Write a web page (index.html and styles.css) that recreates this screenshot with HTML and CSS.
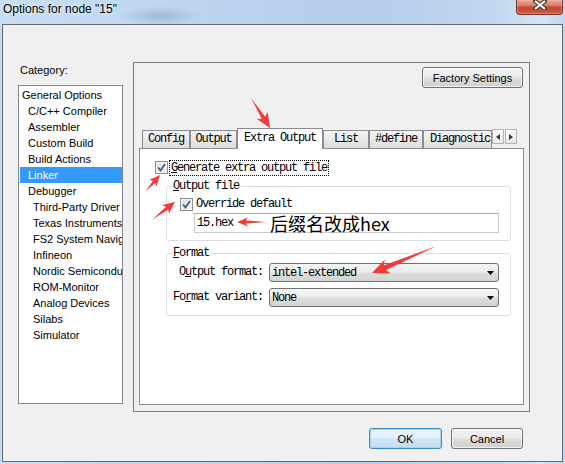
FILE: index.html
```html
<!DOCTYPE html>
<html>
<head>
<meta charset="utf-8">
<title>Options for node "15"</title>
<link rel="stylesheet" href="styles.css">
</head>
<body>
<div class="window">
  <div class="titlebar">
    <span class="title">Options for node "15"</span>
    <div class="close">
      <svg width="14" height="10" viewBox="0 0 14 10"><path d="M2 1 L12 9 M12 1 L2 9" stroke="#4a3a3a" stroke-width="4.2" stroke-linecap="square"/><path d="M2 1 L12 9 M12 1 L2 9" stroke="#fff" stroke-width="2.2"/></svg>
    </div>
  </div>
  <div class="client">
    <div class="main">
      <div class="category">
        <div class="cat-label">Category:</div>
        <ul class="cat-list">
          <li class="l0">General Options</li>
          <li class="l1">C/C++ Compiler</li>
          <li class="l1">Assembler</li>
          <li class="l1">Custom Build</li>
          <li class="l1">Build Actions</li>
          <li class="l1 sel">Linker</li>
          <li class="l1">Debugger</li>
          <li class="l2">Third-Party Driver</li>
          <li class="l2">Texas Instruments</li>
          <li class="l2">FS2 System Navigator</li>
          <li class="l2">Infineon</li>
          <li class="l2">Nordic Semiconductor</li>
          <li class="l2">ROM-Monitor</li>
          <li class="l2">Analog Devices</li>
          <li class="l2">Silabs</li>
          <li class="l2">Simulator</li>
        </ul>
      </div>
      <div class="panel">
        <div class="panel-top"><div class="btn factory">Factory Settings</div></div>
        <div class="tabbar">
          <div class="tabs">
            <div class="tab t-config">Config</div>
            <div class="tab t-output">Output</div>
            <div class="tab active t-extra">Extra Output</div>
            <div class="tab t-list">List</div>
            <div class="tab t-define">#define</div>
            <div class="tab t-diag">Diagnostic</div>
          </div>
          <div class="tab-arrows">
            <span class="tarrow"><svg width="4" height="6" viewBox="0 0 4 6"><path d="M4 0 L0 3 L4 6 Z" fill="#2b3a55"/></svg></span>
            <span class="tarrow"><svg width="4" height="6" viewBox="0 0 4 6"><path d="M0 0 L4 3 L0 6 Z" fill="#2b3a55"/></svg></span>
          </div>
        </div>
        <div class="tabpage">
          <div class="chk-row gen">
            <span class="chk"><svg width="9" height="9" viewBox="0 0 9 9"><path d="M1 4.5 L3.5 7.5 L8 1" stroke="#3c5a9a" stroke-width="1.8" fill="none"/></svg></span>
            <span class="chk-text focus"><u>G</u>enerate extra output file</span>
          </div>
          <fieldset class="group out-group">
            <legend><u>O</u>utput file</legend>
            <div class="chk-row ovr">
              <span class="chk"><svg width="9" height="9" viewBox="0 0 9 9"><path d="M1 4.5 L3.5 7.5 L8 1" stroke="#3c5a9a" stroke-width="1.8" fill="none"/></svg></span>
              <span class="chk-text">Override default</span>
            </div>
            <div class="textfield"><span class="mono">15.hex</span><span class="note">后缀名改成hex</span></div>
          </fieldset>
          <fieldset class="group fmt-group">
            <legend><u>F</u>ormat</legend>
            <div class="form-grid">
              <label class="flabel">O<u>u</u>tput format:</label>
              <div class="combo"><span class="mono">intel-extended</span><svg class="caret" width="7" height="4" viewBox="0 0 7 4"><path d="M0 0 L7 0 L3.5 4 Z" fill="#000"/></svg></div>
              <label class="flabel">Fo<u>r</u>mat variant:</label>
              <div class="combo"><span class="mono">None</span><svg class="caret" width="7" height="4" viewBox="0 0 7 4"><path d="M0 0 L7 0 L3.5 4 Z" fill="#000"/></svg></div>
            </div>
          </fieldset>
        </div>
      </div>
    </div>
    <div class="buttons">
      <div class="btn ok">OK</div>
      <div class="btn cancel">Cancel</div>
    </div>
  </div>
  <svg class="annot" width="565" height="464" viewBox="0 0 565 464">
    <g fill="#f23c3a">
      <g transform="translate(270,128) rotate(57.7)"><polygon points="-35.5,0 -12,-2 -15,-6.5 0,0 -15,6.5 -12,2"/></g>
      <g transform="translate(160,175) rotate(-48.8)"><polygon points="-22,0 -9,-1.6 -11,-5 0,0 -11,5 -9,1.6"/></g>
      <g transform="translate(175,202) rotate(-38)"><polygon points="-29,0 -10,-1.8 -12,-5.5 0,0 -12,5.5 -10,1.8"/></g>
      <g transform="translate(237,222) rotate(180)"><polygon points="-29,0 -9,-1.6 -11,-4.5 0,0 -11,4.5 -9,1.6"/></g>
      <g transform="translate(372,273) rotate(157.4)"><polygon points="-70,0 -14,-2.6 -17,-7.5 0,0 -17,7.5 -14,2.6"/></g>
    </g>
  </svg>
</div>
</body>
</html>
```

FILE: styles.css
```css
* { box-sizing: border-box; }
html, body { margin: 0; padding: 0; }
body {
  width: 565px;
  height: 464px;
  overflow: hidden;
  font-family: "Liberation Sans", Arial, sans-serif;
  font-size: 11px;
  color: #000;
}
.window {
  position: relative;
  width: 565px;
  height: 464px;
  display: flex;
  flex-direction: column;
  background:
    radial-gradient(ellipse 40px 10px at 160px 16px, rgba(120,150,190,0.45), rgba(120,150,190,0) 100%),
    linear-gradient(to right, #c8ddf3 0%, #bcd5ef 35%, #b3cdea 65%, #c2d8f0 88%, #d3e5f7 96%, #bfd6ef 100%);
}
.titlebar {
  height: 24px;
  display: flex;
  align-items: flex-start;
  flex-shrink: 0;
}
.title {
  margin: 2px 0 0 3px;
  font-size: 12px;
  line-height: 14px;
  text-shadow: 0 0 6px #e8f2fc, 0 0 3px #e8f2fc;
}
.close {
  margin-left: auto;
  margin-right: 2px;
  width: 47px;
  height: 15px;
  border: 1px solid #7a3328;
  border-top: none;
  border-radius: 0 0 4px 4px;
  background: linear-gradient(#e3a797 0%, #d88771 35%, #c5462f 55%, #cf5d45 100%);
  box-shadow: inset 0 0 0 1px rgba(255,200,190,0.35);
  display: flex;
  align-items: flex-start;
  justify-content: center;
}
.client {
  margin: 0 2px 2px 2px;
  height: 438px;
  border: 1px solid #636a73;
  background: #f0f0f0;
  display: flex;
  flex-direction: column;
}
.main {
  display: flex;
  margin-top: 37px;
  padding-left: 15px;
  gap: 10px;
}
.category {
  width: 105px;
  display: flex;
  flex-direction: column;
}
.cat-label {
  margin: 2px 0 0 2px;
  line-height: 13px;
  height: 13px;
}
.cat-list {
  list-style: none;
  margin: 8px 0 0 0;
  padding: 1px 0 0 0;
  width: 105px;
  height: 319px;
  border: 1px solid #828790;
  background: #fff;
  overflow: hidden;
}
.cat-list li {
  height: 16px;
  line-height: 16px;
  margin-left: 1px;
  white-space: nowrap;
  overflow: hidden;
}
.cat-list .l0 { padding-left: 2px; }
.cat-list .l1 { padding-left: 8px; }
.cat-list .l2 { padding-left: 13px; }
.cat-list .sel { background: #3399ff; color: #fff; }

.panel {
  width: 397px;
  height: 350px;
  border: 1px solid #7d7d7d;
  padding: 4px 5px 6px 5px;
  display: flex;
  flex-direction: column;
}
.panel-top {
  display: flex;
  justify-content: flex-end;
  padding-right: 1px;
}
.btn {
  display: flex;
  align-items: center;
  justify-content: center;
  height: 21px;
  border: 1px solid #707070;
  border-radius: 3px;
  background: linear-gradient(#f2f2f2 0%, #ebebeb 48%, #dddddd 52%, #cfcfcf 100%);
  box-shadow: inset 0 0 0 1px rgba(255,255,255,0.7);
  font-size: 11px;
  color: #000;
}
.factory { width: 101px; }

.tabbar {
  display: flex;
  margin-top: 40px;
  margin-left: 3px;
  height: 21px;
}
.tabs {
  display: flex;
  width: 350px;
  height: 21px;
  overflow: hidden;
  flex-shrink: 0;
}
.tab {
  flex-shrink: 0;
  height: 18px;
  margin-top: 2px;
  border: 1px solid #898c95;
  border-bottom: none;
  background: linear-gradient(#f4f4f4, #e9e9e9 50%, #dedede 100%);
  font-family: "Liberation Mono", "DejaVu Sans Mono", monospace;
  font-size: 12px;
  letter-spacing: -1.2px;
  line-height: 17px;
  text-align: center;
  white-space: nowrap;
  overflow: hidden;
}
.tab.active {
  position: relative;
  z-index: 1;
  height: 21px;
  margin-top: 0;
  background: #fff;
  padding-top: 1px;
}
.t-config { width: 48px; }
.t-output { width: 47px; }
.t-extra { width: 86px; }
.t-list { width: 46px; }
.t-define { width: 54px; }
.t-diag { width: 69px; text-align: left; padding-left: 6px; }
.tab-arrows {
  display: flex;
  gap: 1px;
  margin-top: 1px;
  height: 15px;
}
.tarrow {
  width: 12px;
  height: 15px;
  border: 1px solid #b5b5b5;
  background: linear-gradient(#fbfbfb, #e8e8e8);
  display: flex;
  align-items: center;
  justify-content: center;
}

.tabpage {
  width: 385px;
  height: 257px;
  margin-top: -1px;
  border: 1px solid #898c95;
  background: #fff;
  display: flex;
  flex-direction: column;
  align-items: flex-start;
}
.mono, .chk-text, legend, .flabel {
  font-family: "Liberation Mono", "DejaVu Sans Mono", monospace;
  font-size: 12px;
  letter-spacing: -1.2px;
  white-space: nowrap;
}
.chk-row {
  display: flex;
  align-items: center;
  height: 13px;
}
.gen { margin: 12px 0 0 15px; }
.chk {
  width: 13px;
  height: 13px;
  border: 1px solid #8e8f8f;
  background: linear-gradient(135deg, #dcdcdc, #fbfbfb);
  box-shadow: inset 0 0 0 1px #f4f4f4;
  display: flex;
  align-items: center;
  justify-content: center;
  flex-shrink: 0;
}
.chk-text {
  margin-left: 3px;
  line-height: 13px;
}
.focus {
  margin-left: 2px;
  padding: 0 1px;
  outline: 1px dotted #000;
  outline-offset: 0;
  height: 14px;
  line-height: 14px;
}
.group {
  margin: 0;
  padding: 0;
  min-width: 0;
  width: 345px;
  border: 1px solid #d5dfe5;
  border-radius: 3px;
  margin-left: 26px;
}
.group legend {
  margin-left: 5px;
  padding: 0 1px;
  line-height: 12px;
  height: 12px;
}
.out-group {
  margin-top: 6px;
  padding-bottom: 7px;
}
.ovr { margin: 6px 0 0 13px; }
.textfield {
  margin: 2px 0 0 27px;
  width: 305px;
  height: 20px;
  border: 1px solid #c9ccd2;
  border-top-color: #a6a8ae;
  background: #fff;
  display: flex;
  align-items: center;
  padding-left: 2px;
}
.note {
  margin-left: 37px;
  font-family: "Noto Sans CJK SC", "Noto Sans", sans-serif;
  font-size: 18px;
  line-height: 18px;
  letter-spacing: 0;
  color: #000;
}
.fmt-group {
  margin-top: 6px;
  padding-bottom: 8px;
}
.form-grid {
  display: grid;
  grid-template-columns: 90px 230px;
  column-gap: 6px;
  row-gap: 6px;
  margin: 4px 0 0 6px;
}
.flabel {
  text-align: right;
  line-height: 19px;
  height: 19px;
}
.combo {
  height: 19px;
  border: 1px solid #707070;
  border-radius: 3px;
  background: linear-gradient(#f4f4f4 0%, #ebebeb 48%, #dddddd 52%, #d3d3d3 100%);
  display: flex;
  align-items: center;
  padding-left: 2px;
}
.caret {
  margin-left: auto;
  margin-right: 4px;
}

.buttons {
  display: flex;
  justify-content: flex-end;
  gap: 9px;
  margin-top: 16px;
  padding-right: 39px;
}
.ok {
  width: 73px;
  border-color: #3c8ccc;
  background: linear-gradient(#edf6fc 0%, #e1eff9 48%, #cfe5f5 52%, #c2ddf1 100%);
  box-shadow: inset 0 0 0 1px #9fd6f5;
}
.cancel { width: 72px; }

.annot {
  position: absolute;
  left: 0;
  top: 0;
  pointer-events: none;
}
```
